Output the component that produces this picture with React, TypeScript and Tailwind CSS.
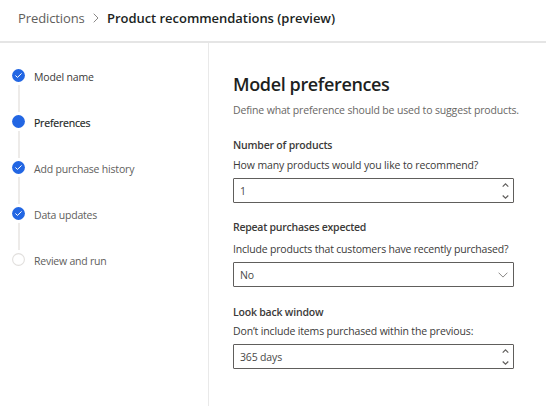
import React from 'react';

type StepState = 'done' | 'current' | 'todo';

const steps: { label: string; state: StepState; text: string }[] = [
  { label: 'Model name', state: 'done', text: 'text-[#3b3a39] tracking-[-0.16px]' },
  { label: 'Preferences', state: 'current', text: 'text-[#201f1e] font-medium tracking-[-0.2px] [-webkit-text-stroke:0.15px_#201f1e]' },
  { label: 'Add purchase history', state: 'done', text: 'text-[#605e5c] tracking-[-0.19px]' },
  { label: 'Data updates', state: 'done', text: 'text-[#605e5c] tracking-[-0.2px]' },
  { label: 'Review and run', state: 'todo', text: 'text-[#605e5c] tracking-[-0.23px]' },
];

function Marker({ state }: { state: StepState }) {
  return (
    <svg className="block h-[13px] w-[13px]" viewBox="0 0 13 13" fill="none">
      {state === 'todo' ? (
        <circle cx="6.5" cy="6.5" r="5.9" stroke="#e1dfdd" strokeWidth="1.1" />
      ) : (
        <circle cx="6.5" cy="6.5" r="6.4" fill="#2266e3" />
      )}
      {state === 'done' && <path d="M3.4 6.5 5.5 8.4 9.6 4.4" stroke="#fff" strokeWidth="1" />}
    </svg>
  );
}

function Spinner() {
  return (
    <svg className="h-[22px] w-[7px]" viewBox="0 0 7 22" fill="none" stroke="#605e5c" strokeWidth="1.2">
      <path d="M0.7 6.6 3.5 3.9 6.3 6.6M0.7 15.5 3.5 18.2 6.3 15.5" />
    </svg>
  );
}

function Field({ value, children, pad }: { value: string; children: React.ReactNode; pad: string }) {
  return (
    <div className={`flex h-[25px] w-[281px] items-center justify-between rounded-[1px] border border-[#605e5c] pl-[6px] text-[#4a4948] ${pad}`}>
      <span className="tracking-[-0.16px]">{value}</span>
      {children}
    </div>
  );
}

export default function App() {
  return (
    <div className="flex h-[406px] w-[546px] flex-col overflow-hidden bg-white font-['Open_Sans',sans-serif] text-[10.5px] leading-[16px] whitespace-nowrap">
      <header className="flex h-[43px] items-center border-b-2 border-[#e5e5e5] pb-[6px] pl-[18px] text-[13px] leading-[18px]">
        <span className="w-[75px] tracking-[-0.1px] text-[#605e5c]">Predictions</span>
        <svg className="h-[10px] w-[6px]" viewBox="0 0 6 10" fill="none" stroke="#8a8886">
          <path d="M0.7 0.7 5 5 0.7 9.3" />
        </svg>
        <h1 className="ml-[8px] font-semibold tracking-[-0.04px] text-[#201f1e]">Product recommendations (preview)</h1>
      </header>
      <div className="flex flex-1">
        <nav className="w-[209px] border-r border-[#e9e9e9] pt-[26px] pl-[12px]">
          {steps.map((s, i) => (
            <div key={s.label} className="flex h-[46.1px] gap-[9px]">
              <div className="flex w-[13px] flex-col items-center">
                <Marker state={s.state} />
                {i < steps.length - 1 && <span className="mt-[3px] h-[27px] w-[2px] bg-[#edebe9]" />}
              </div>
              <span className={s.text}>{s.label}</span>
            </div>
          ))}
        </nav>
        <main className="flex flex-col pt-[28px] pl-[24px] text-[#3b3a39]">
          <h2 className="text-[18px] leading-[26px] font-semibold tracking-[-0.37px] text-[#201f1e]">Model preferences</h2>
          <p className="mt-[5px] tracking-[-0.155px] text-[#696765]">Define what preference should be used to suggest products.</p>
          <h3 className="mt-[19px] font-semibold tracking-[-0.2px]">Number of products</h3>
          <p className="mt-[4px] mb-[5px] tracking-[-0.13px]">How many products would you like to recommend?</p>
          <Field value="1" pad="pr-[4px]"><Spinner /></Field>
          <h3 className="mt-[16px] font-semibold tracking-[-0.25px]">Repeat purchases expected</h3>
          <p className="mt-[6px] mb-[5px] tracking-[-0.19px]">Include products that customers have recently purchased?</p>
          <Field value="No" pad="pr-[5px]">
            <svg className="h-[6px] w-[10px]" viewBox="0 0 10 6" fill="none" stroke="#8a8886">
              <path d="M0.6 0.7 5 5.1 9.4 0.7" />
            </svg>
          </Field>
          <h3 className="mt-[17px] font-semibold tracking-[-0.2px]">Look back window</h3>
          <p className="mt-[3px] mb-[5px] tracking-[-0.15px]">Don’t include items purchased within the previous:</p>
          <Field value="365 days" pad="pr-[4px]"><Spinner /></Field>
        </main>
      </div>
    </div>
  );
}
